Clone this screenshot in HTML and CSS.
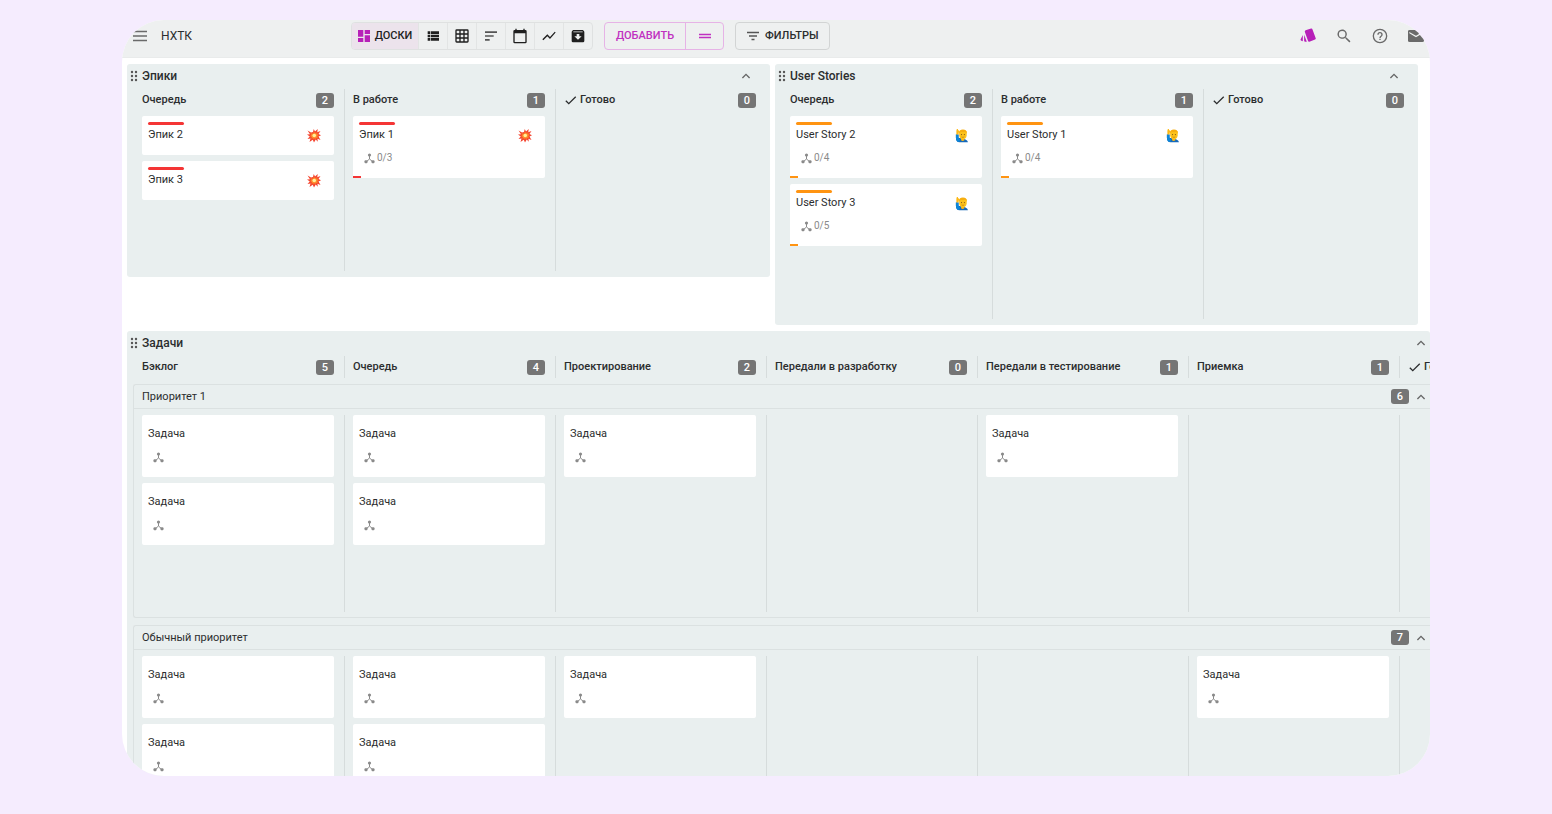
FILE: index.html
```html
<!DOCTYPE html>
<html lang="ru">
<head>
<meta charset="utf-8">
<title>НХТК</title>
<link rel="stylesheet" href="styles.css">
</head>
<body>
<svg class="sprite" aria-hidden="true">
  <symbol id="i-up" viewBox="0 0 24 24"><path d="M12 7.500l-7 7L6.700 16.200 12 10.900l5.300 5.300L19 14.500z"/></symbol>
  <symbol id="i-check" viewBox="0 0 24 24"><path d="M8.800 16.200L4.200 11.600 2.500 13.300l6.300 6.300L22.500 6l-1.700-1.700z"/></symbol>
  <symbol id="i-drag" viewBox="0 0 8 12"><circle cx="2" cy="2" r="1.200"/><circle cx="6" cy="2" r="1.200"/><circle cx="2" cy="6" r="1.200"/><circle cx="6" cy="6" r="1.200"/><circle cx="2" cy="10" r="1.200"/><circle cx="6" cy="10" r="1.200"/></symbol>
  <symbol id="i-tree" viewBox="0 0 22 22"><path d="M11 4v8M11 12L4 18M11 12l7 6" fill="none" stroke="currentColor" stroke-width="2"/><circle cx="11" cy="4" r="3.200"/><rect x="1" y="14.500" width="6" height="6" rx="2"/><rect x="15" y="14.500" width="6" height="6" rx="2"/></symbol>
  <symbol id="i-boom" viewBox="0 0 28 28"><path fill="#f4442e" d="M12 7l1.500-6L16 6l5.500-5-1 6.500L27 5l-4 6 5 2.500-5 2.500 4 7-6-2.500.5 6-4-4.500L14 28l-2.500-5.500L5 27l2-7-6 1 4.500-5L0 12l6-.5L1 4l7 4z"/><path fill="#ff8a2a" d="M12.500 10l1.500-4 2 3.500 3-2.500v4l4-1-2.500 3.500 3 1-3.500 1.500 2 3.500-4-1 .5 3-3-2.500-1.500 3.500-2-3.500-3.500 2 1.500-4-4 .5 3-2.500-3-2 3.500-.5L6 8.500l4 2z"/><circle cx="14.500" cy="14" r="3.600" fill="#fff09a"/></symbol>
  <symbol id="i-man" viewBox="0 0 28 32"><path fill="#1668b8" d="M1 14h5.500v7c5 2 20 2 20 9.500H9C3 30 1 26 1 20z"/><path fill="#0c86d8" d="M1 14h5.500v7L10 25l-2 5C3 29 1 26 1 20z"/><path fill="#fdb813" d="M2 14V6l1-4h2l1 3 2 1-1.500 8zM12 22h7v4q-3.500 3-7 0z"/><path fill="#fcc21b" d="M8 10q0-6 8-6t8 6v6q-1 8-8 8t-8-8z"/><path fill="#f7ae10" d="M7.500 11q0-8 8.500-8t8.500 8v2q-1-4-4-5-5 1-9 0-3 2-4 5z"/><circle cx="13" cy="14" r="1.200" fill="#7a5016"/><circle cx="19" cy="14" r="1.200" fill="#7a5016"/><path d="M13 19q3 2 6 0" fill="none" stroke="#c07a08" stroke-width="1.500"/></symbol>
</svg>

<main class="window">
  <header class="bar">
    <div class="brand">
      <button class="icon-btn" aria-label="Меню"><svg class="ic14" viewBox="0 0 14 14"><path d="M0 2.500h14M0 7h14M0 11.500h14" stroke="currentColor" stroke-width="1.400"/></svg></button>
      <span class="brand-name">НХТК</span>
    </div>
    <nav class="group views">
      <button class="seg seg-active"><svg class="ic12" viewBox="0 0 12 12"><path fill="#b720b8" d="M0 0h5.300v6.700H0zM0 8h5.300v4H0zM6.700 0H12v4H6.700zM6.700 5.300H12V12H6.700z"/></svg>ДОСКИ</button>
      <button class="seg" aria-label="Список"><svg class="ic16" viewBox="0 0 24 24"><path d="M4 14h4v-4H4zm0 5h4v-4H4zM4 9h4V5H4zm5 5h12v-4H9zm0 5h12v-4H9zM9 5v4h12V5z"/></svg></button>
      <button class="seg" aria-label="Таблица"><svg class="ic16" viewBox="0 0 24 24"><path d="M20 2H4a2 2 0 0 0-2 2v16a2 2 0 0 0 2 2h16a2 2 0 0 0 2-2V4a2 2 0 0 0-2-2zM8 20H4v-4h4zm0-6H4v-4h4zm0-6H4V4h4zm6 12h-4v-4h4zm0-6h-4v-4h4zm0-6h-4V4h4zm6 12h-4v-4h4zm0-6h-4v-4h4zm0-6h-4V4h4z"/></svg></button>
      <button class="seg" aria-label="Таймлайн"><svg class="ic16 muted" viewBox="0 0 24 24"><path d="M3 19h7v-2.500H3zM3 5v2.500h18V5zm0 8.200h13v-2.500H3z"/></svg></button>
      <button class="seg" aria-label="Календарь"><svg class="ic16" viewBox="0 0 24 24"><path d="M20 3h-1V1h-2v2H7V1H5v2H4a2 2 0 0 0-2 2v16a2 2 0 0 0 2 2h16a2 2 0 0 0 2-2V5a2 2 0 0 0-2-2zm0 18H4V8h16z"/></svg></button>
      <button class="seg" aria-label="Отчёты"><svg class="ic16" viewBox="0 0 24 24"><path d="M3.500 18.500l6-6 4 4L22 6.900l-1.400-1.400-7.100 8-4-4L2 17z"/></svg></button>
      <button class="seg" aria-label="Архив"><svg class="ic16" viewBox="0 0 24 24"><path fill-rule="evenodd" d="M4.500 3h15L21.500 5.500V19.500a2 2 0 0 1-2 2h-15a2 2 0 0 1-2-2V5.500zM5 5.200h14v1.200H5zM10 9v3.500H6.500l5.500 5 5.500-5H14V9z"/></svg></button>
    </nav>
    <div class="group group-add">
      <button class="seg seg-add">ДОБАВИТЬ</button>
      <button class="seg seg-two" aria-label="Добавить строку"><svg class="ic12" viewBox="0 0 12 12"><path d="M0 4.500h12M0 7.500h12" stroke="currentColor" stroke-width="1.500"/></svg></button>
    </div>
    <button class="filters"><svg class="ic12" viewBox="0 0 12 12"><path d="M0 2.500h12M2 6h8M4.500 9.500h3" stroke="#555" stroke-width="1.500"/></svg>ФИЛЬТРЫ</button>
    <div class="tools">
      <button class="icon-btn" aria-label="Карточки"><svg class="ic16" viewBox="0 0 24 24"><path fill="#b720b8" d="M8.500 3.500L16.600.7q1.500-.4 2 1l5 13.500q.5 1.500-1 2l-8.500 3.300q-1.500.5-2-1L7.300 6q-.5-1.900 1.200-2.500zM6.200 10l4 10.800H8q-1.800 0-1.800-2zM4.200 10.500V20L2 19q-1.600-.8-1-2.300z"/></svg></button>
      <button class="icon-btn" aria-label="Поиск"><svg class="ic16" viewBox="0 0 24 24"><path d="M15.500 14h-.8l-.3-.3a6.500 6.500 0 1 0-.7.700l.3.300v.8l5.500 5.500 1.500-1.500zm-6 0a4.500 4.500 0 1 1 0-9 4.500 4.500 0 0 1 0 9z" transform="translate(-1 -1) scale(1.080)"/></svg></button>
      <button class="icon-btn" aria-label="Справка"><svg class="ic16" viewBox="0 0 24 24"><circle cx="12" cy="12" r="10" fill="none" stroke="currentColor" stroke-width="2"/><path d="M11 16h2v2h-2zM12 6a4 4 0 0 0-4 4h2a2 2 0 1 1 4 0c0 2-3 1.800-3 5h2c0-2.200 3-2.500 3-5a4 4 0 0 0-4-4z"/></svg></button>
      <button class="icon-btn" aria-label="Сообщения"><svg class="ic16" viewBox="0 0 24 24"><path fill-rule="evenodd" d="M2.500 3H15q.5 4 5 5.500l4 .5v10q0 2-2.500 2h-19Q0 21 0 19V5q0-2 2.500-2zM2 6v1.800l10 6 7-4-2-1.200-5 3z"/></svg></button>
    </div>
  </header>

  <div class="boards-row">
    <section class="board">
      <div class="board-head"><svg class="drag"><use href="#i-drag"/></svg><h2>Эпики</h2><button class="fold" aria-label="Свернуть"><svg class="ic14"><use href="#i-up"/></svg></button></div>
      <div class="cols heads">
        <div class="col head"><h3>Очередь</h3><span class="count">2</span></div>
        <div class="col head"><h3>В работе</h3><span class="count">1</span></div>
        <div class="col head"><svg class="check"><use href="#i-check"/></svg><h3>Готово</h3><span class="count">0</span></div>
      </div>
      <div class="cols body-epics">
        <div class="col list">
          <article class="card epic"><i class="tag"></i><p>Эпик 2</p><svg class="emoji"><use href="#i-boom"/></svg></article>
          <article class="card epic"><i class="tag"></i><p>Эпик 3</p><svg class="emoji"><use href="#i-boom"/></svg></article>
        </div>
        <div class="col list">
          <article class="card epic"><i class="tag"></i><p>Эпик 1</p><svg class="emoji"><use href="#i-boom"/></svg><div class="meta"><svg><use href="#i-tree"/></svg>0/3</div><b class="progress"></b></article>
        </div>
        <div class="col list"></div>
      </div>
    </section>

    <section class="board">
      <div class="board-head"><svg class="drag"><use href="#i-drag"/></svg><h2>User Stories</h2><button class="fold" aria-label="Свернуть"><svg class="ic14"><use href="#i-up"/></svg></button></div>
      <div class="cols heads">
        <div class="col head"><h3>Очередь</h3><span class="count">2</span></div>
        <div class="col head"><h3>В работе</h3><span class="count">1</span></div>
        <div class="col head"><svg class="check"><use href="#i-check"/></svg><h3>Готово</h3><span class="count">0</span></div>
      </div>
      <div class="cols body-stories">
        <div class="col list">
          <article class="card story"><i class="tag"></i><p>User Story 2</p><svg class="emoji"><use href="#i-man"/></svg><div class="meta"><svg><use href="#i-tree"/></svg>0/4</div><b class="progress"></b></article>
          <article class="card story"><i class="tag"></i><p>User Story 3</p><svg class="emoji"><use href="#i-man"/></svg><div class="meta"><svg><use href="#i-tree"/></svg>0/5</div><b class="progress"></b></article>
        </div>
        <div class="col list">
          <article class="card story"><i class="tag"></i><p>User Story 1</p><svg class="emoji"><use href="#i-man"/></svg><div class="meta"><svg><use href="#i-tree"/></svg>0/4</div><b class="progress"></b></article>
        </div>
        <div class="col list"></div>
      </div>
    </section>
  </div>

  <section class="board board-wide">
    <div class="board-head"><svg class="drag"><use href="#i-drag"/></svg><h2>Задачи</h2><button class="fold" aria-label="Свернуть"><svg class="ic14"><use href="#i-up"/></svg></button></div>
    <div class="cols heads">
      <div class="col head"><h3>Бэклог</h3><span class="count">5</span></div>
      <div class="col head"><h3>Очередь</h3><span class="count">4</span></div>
      <div class="col head"><h3>Проектирование</h3><span class="count">2</span></div>
      <div class="col head"><h3>Передали в разработку</h3><span class="count">0</span></div>
      <div class="col head"><h3>Передали в тестирование</h3><span class="count">1</span></div>
      <div class="col head"><h3>Приемка</h3><span class="count">1</span></div>
      <div class="col head"><svg class="check"><use href="#i-check"/></svg><h3>Готово</h3></div>
    </div>

    <section class="lane">
      <div class="lane-head"><h3>Приоритет 1</h3><span class="count">6</span><button class="fold" aria-label="Свернуть"><svg class="ic14"><use href="#i-up"/></svg></button></div>
      <div class="cols lane-body">
        <div class="col list">
          <article class="card"><i class="tag"></i><p>Задача</p><div class="meta"><svg><use href="#i-tree"/></svg></div></article>
          <article class="card"><i class="tag"></i><p>Задача</p><div class="meta"><svg><use href="#i-tree"/></svg></div></article>
        </div>
        <div class="col list">
          <article class="card"><i class="tag"></i><p>Задача</p><div class="meta"><svg><use href="#i-tree"/></svg></div></article>
          <article class="card"><i class="tag"></i><p>Задача</p><div class="meta"><svg><use href="#i-tree"/></svg></div></article>
        </div>
        <div class="col list">
          <article class="card"><i class="tag"></i><p>Задача</p><div class="meta"><svg><use href="#i-tree"/></svg></div></article>
        </div>
        <div class="col list"></div>
        <div class="col list">
          <article class="card"><i class="tag"></i><p>Задача</p><div class="meta"><svg><use href="#i-tree"/></svg></div></article>
        </div>
        <div class="col list"></div>
        <div class="col list"></div>
      </div>
    </section>

    <section class="lane">
      <div class="lane-head"><h3>Обычный приоритет</h3><span class="count">7</span><button class="fold" aria-label="Свернуть"><svg class="ic14"><use href="#i-up"/></svg></button></div>
      <div class="cols lane-body">
        <div class="col list">
          <article class="card"><i class="tag"></i><p>Задача</p><div class="meta"><svg><use href="#i-tree"/></svg></div></article>
          <article class="card"><i class="tag"></i><p>Задача</p><div class="meta"><svg><use href="#i-tree"/></svg></div></article>
        </div>
        <div class="col list">
          <article class="card"><i class="tag"></i><p>Задача</p><div class="meta"><svg><use href="#i-tree"/></svg></div></article>
          <article class="card"><i class="tag"></i><p>Задача</p><div class="meta"><svg><use href="#i-tree"/></svg></div></article>
        </div>
        <div class="col list">
          <article class="card"><i class="tag"></i><p>Задача</p><div class="meta"><svg><use href="#i-tree"/></svg></div></article>
        </div>
        <div class="col list"></div>
        <div class="col list"></div>
        <div class="col list">
          <article class="card"><i class="tag"></i><p>Задача</p><div class="meta"><svg><use href="#i-tree"/></svg></div></article>
        </div>
        <div class="col list"></div>
      </div>
    </section>
  </section>
</main>
</body>
</html>
```
FILE: styles.css
```css
* { box-sizing: border-box; margin: 0; }

body {
  height: 100vh;
  padding: 20px 122px 38px;
  background: #f5ecfe;
  color: #2b2d2e;
  font: 400 11px/16px Roboto, "Liberation Sans", sans-serif;
}

button {
  display: flex;
  align-items: center;
  justify-content: center;
  padding: 0;
  border: 0;
  background: none;
  color: inherit;
  font: inherit;
}

svg { display: block; flex: none; fill: currentColor; }
.sprite { position: absolute; width: 0; height: 0; }
.ic12 { width: 12px; height: 12px; }
.ic14 { width: 14px; height: 14px; }
.ic16 { width: 16px; height: 16px; }

.window {
  height: 100%;
  overflow: hidden;
  border-radius: 42px;
  background: #fff;
}

/* top bar */
.bar {
  display: flex;
  align-items: center;
  gap: 11px;
  padding: 2px 6px 7px 11px;
  border-bottom: 1px solid #e9ebeb;
  background: #eef0f0;
}
.brand { display: flex; align-items: center; gap: 14px; width: 207px; }
.brand-name { font-size: 12px; }
.icon-btn { color: #6a6a6a; }
.group {
  display: flex;
  height: 28px;
  border: 1px solid #dfe1e1;
  border-radius: 4px;
  overflow: hidden;
}
.seg { width: 29px; color: #1f1f1f; font-weight: 500; }
.seg + .seg { border-left: 1px solid #e2e4e4; }
.muted { color: #555; }
.seg-active { gap: 5px; width: 66px; background: #ece3ec; }
.group-add { border-color: #e6b3e6; }
.group-add .seg { color: #c030c0; }
.group-add .seg-add { width: 80px; }
.group-add .seg-two { width: 38px; border-left-color: #e6b3e6; }
.filters {
  gap: 6px;
  height: 28px;
  padding: 0 11px;
  border: 1px solid #d2d4d4;
  border-radius: 4px;
  font-weight: 500;
}
.tools { display: flex; gap: 20px; margin-left: auto; }

/* boards */
.boards-row { display: flex; align-items: flex-start; gap: 5px; padding: 6px 5px; }
.board { flex: none; padding: 0 4px 6px 6px; border-radius: 3px; background: #e9efef; }
.board-wide { margin-left: 5px; padding-right: 0; overflow: hidden; }
.board-head { display: flex; align-items: center; gap: 4px; height: 24px; }
.drag { width: 8px; height: 12px; margin-left: -3px; color: #555; }
h2 { font-size: 12px; font-weight: 500; }
h3 { font-size: 11px; font-weight: 500; white-space: nowrap; }
.fold { margin-left: auto; margin-right: 13px; color: #666; }
.board-wide .fold { margin-right: 2px; }

.cols { display: flex; }
.col {
  flex: none;
  width: 211px;
  padding: 0 10px 0 8px;
  border-left: 1px solid #d6dcdc;
}
.col:first-child { border-left-color: transparent; }
.head { display: flex; align-items: center; height: 22px; margin-top: 1px; }
.heads { height: 22px; }
.check { width: 13px; height: 13px; margin-right: 3px; }
.count {
  width: 18px;
  margin-left: auto;
  border-radius: 3px;
  background: #757575;
  color: #fff;
  font-size: 11px;
  font-weight: 500;
  line-height: 15px;
  text-align: center;
}

.list { display: flex; flex-direction: column; gap: 6px; }
.body-epics { min-height: 161px; }
.body-stories { min-height: 209px; }
.body-epics .list, .body-stories .list { padding-top: 6px; }

/* cards */
.card {
  position: relative;
  padding: 6px 6px 12px;
  border-radius: 2px;
  background: #fff;
}
.tag { display: block; width: 36px; height: 3px; margin-bottom: 2px; border-radius: 2px; }
.epic .tag, .epic .progress { background: #f43535; }
.story .tag, .story .progress { background: #ff9412; }
.emoji { position: absolute; top: 12px; right: 13px; width: 14px; height: 15px; }
.meta {
  display: flex;
  align-items: center;
  gap: 2px;
  height: 16px;
  margin-top: 7px;
  padding-left: 5px;
  color: #8a8a8a;
  font-size: 10px;
}
.meta svg { width: 11px; height: 11px; }
.progress { position: absolute; bottom: 0; left: 0; width: 8px; height: 2px; }

/* swimlanes */
.lane {
  margin-top: 7px;
  border: solid #dbe1e1;
  border-width: 1px 0 1px 1px;
  border-radius: 3px 0 0 3px;
}
.heads + .lane { margin-top: 7px; }
.lane-head {
  display: flex;
  align-items: center;
  height: 24px;
  padding-left: 8px;
  border-bottom: 1px solid #dbe1e1;
}
.lane-head h3 { font-weight: 400; }
.lane-head .fold { margin-left: 5px; }
.lane-body { min-height: 208px; padding: 6px 0 5px; }
.lane-body .col:first-child { width: 210px; border-left: 0; }
```
